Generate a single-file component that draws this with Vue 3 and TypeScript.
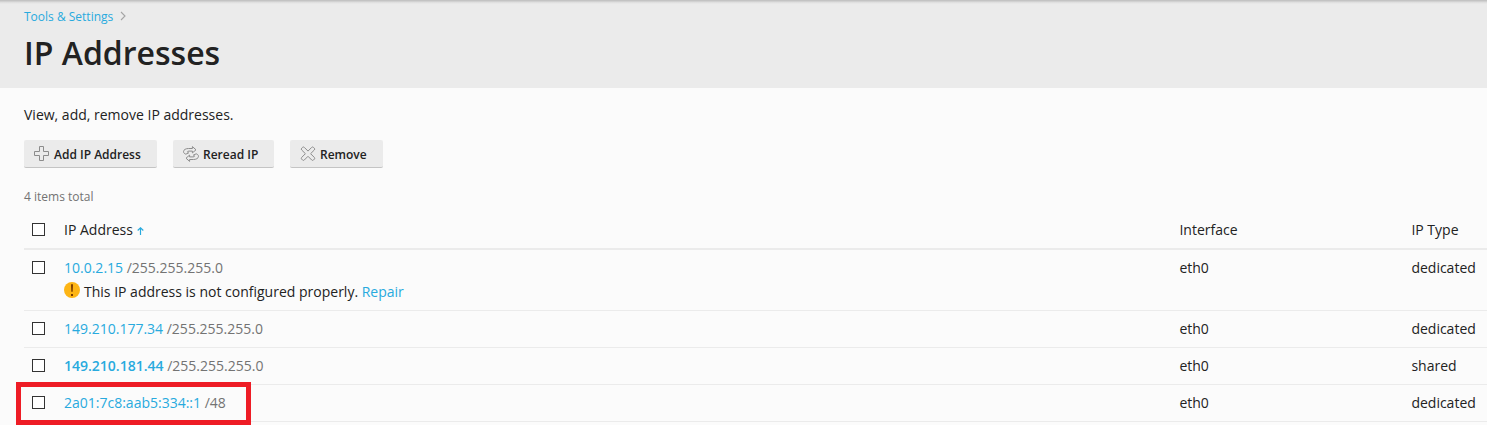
<script setup lang="ts">
interface Address {
  ip: string
  mask: string
  iface: string
  type: string
  main?: boolean
  broken?: boolean
  marked?: boolean
}

const addresses: Address[] = [
  { ip: '10.0.2.15', mask: '/255.255.255.0', iface: 'eth0', type: 'dedicated', broken: true },
  { ip: '149.210.177.34', mask: '/255.255.255.0', iface: 'eth0', type: 'dedicated' },
  { ip: '149.210.181.44', mask: '/255.255.255.0', iface: 'eth0', type: 'shared', main: true },
  { ip: '2a01:7c8:aab5:334::1', mask: '/48', iface: 'eth0', type: 'dedicated', marked: true },
]
</script>

<template>
  <div class="page">
    <header class="heading">
      <nav class="crumbs">
        <a class="link">Tools &amp; Settings</a>
        <svg class="chevron" width="6" height="10" viewBox="0 0 6 10"><path d="M1 1l4 4-4 4" /></svg>
      </nav>
      <h1>IP Addresses</h1>
    </header>

    <main class="content">
      <p class="intro">View, add, remove IP addresses.</p>

      <div class="toolbar">
        <button class="btn add" type="button">
          <svg width="16" height="16" viewBox="0 0 16 16">
            <path d="M5.5 .5h4v5h5v4h-5v5h-4v-5h-5v-4h5z" />
          </svg>
          <span>Add IP Address</span>
        </button>
        <button class="btn reread" type="button">
          <svg width="16" height="16" viewBox="0 0 16 16">
            <path d="M2.800 8.200C1.200 7.600.5 6.700.5 5.700.5 3.600 3 2.500 5.500 2.500H9.400V.6L13 3.800 9.400 6.900V5.100H6C4 5.100 3.900 6.400 5.600 6.900" />
            <path d="M13.200 7.800C14.800 8.400 15.500 9.300 15.500 10.300 15.500 12.400 13 13.500 10.500 13.500H6.600V15.400L3 12.200 6.600 9.100V10.900H10C12 10.900 12.100 9.600 10.400 9.100" />
            <path d="M2.800 8.200L5.600 6.900M13.200 7.800L10.400 9.100" />
          </svg>
          <span>Reread IP</span>
        </button>
        <button class="btn remove" type="button">
          <svg width="16" height="16" viewBox="-.5 -.2 16 16">
            <path d="M7.500 4.900L11.200 1.200Q12.100 .3 13 1.200L13.800 2Q14.700 2.900 13.800 3.800L10.100 7.500L13.800 11.200Q14.700 12.100 13.800 13L13 13.800Q12.100 14.700 11.200 13.800L7.500 10.100L3.800 13.800Q2.900 14.700 2 13.800L1.200 13Q.3 12.100 1.200 11.200L4.900 7.500L1.200 3.800Q.3 2.900 1.200 2L2 1.200Q2.900 .3 3.800 1.200Z" />
          </svg>
          <span>Remove</span>
        </button>
      </div>

      <div class="total">4 items total</div>

      <div class="list">
        <div class="row head">
          <span class="check"><i class="box"></i></span>
          <span class="sort">IP Address
            <svg width="7" height="8" viewBox="0 0 7 8"><path d="M3.500 8V1M.7 3.500L3.500 .8 6.300 3.500" /></svg>
          </span>
          <span>Interface</span>
          <span>IP Type</span>
        </div>
        <div v-for="a in addresses" :key="a.ip" class="row">
          <span class="check"><i class="box"></i></span>
          <div>
            <div><a class="link" :class="{ main: a.main }">{{ a.ip }}</a> <span class="mask">{{ a.mask }}</span></div>
            <div v-if="a.broken" class="warning">
              <svg width="16" height="16" viewBox="0 0 16 16">
                <circle cx="8" cy="8" r="8" />
                <path d="M7 2.200h2L8.700 9.800H7.300zM7 12h2v2H7z" />
              </svg>
              <span>This IP address is not configured properly. <a class="link">Repair</a></span>
            </div>
          </div>
          <span>{{ a.iface }}</span>
          <span>{{ a.type }}</span>
          <i v-if="a.marked" class="marker"></i>
        </div>
      </div>
    </main>
  </div>
</template>

<style>
html,
body {
  margin: 0;
  overflow: hidden;
  background: #fbfbfb;
}
</style>

<style scoped>
.page {
  height: 425px;
  overflow: hidden;
  background: #fbfbfb;
  color: #222;
  font: 14px/24px "Open Sans", "Noto Sans", sans-serif;
}
.heading {
  box-sizing: border-box;
  height: 88px;
  padding: 7px 24px 0;
  background: linear-gradient(#c0c0c0 0, #c6c6c6 1px, #dcdcdc 2px, #ebebeb 4px);
}
.crumbs {
  display: flex;
  align-items: center;
  gap: 7px;
  height: 20px;
  font-size: 12px;
}
.chevron {
  margin-top: -2px;
}
.chevron path {
  fill: none;
  stroke: #a4a4a4;
  stroke-width: 1.1;
}
.link {
  color: #28aade;
}
h1 {
  margin: 6px 0 0;
  font-size: 32px;
  line-height: 40px;
  font-weight: 600;
}
.content {
  padding: 15px 0 0 24px;
}
.intro {
  margin: 0;
}
.toolbar {
  display: flex;
  gap: 16px;
  margin-top: 13px;
}
.btn {
  box-sizing: border-box;
  display: flex;
  align-items: center;
  gap: 4px;
  height: 28px;
  padding: 0 0 0 10px;
  border: 0;
  border-bottom: 1px solid #c4c4c4;
  border-radius: 2px;
  background: #ebebeb;
  color: #222;
  font: 600 12px/27px "Open Sans", "Noto Sans", sans-serif;
  white-space: nowrap;
}
.add {
  width: 133px;
}
.reread {
  width: 101px;
}
.remove {
  width: 93px;
}
.btn svg {
  flex: none;
}
.btn span {
  padding-top: 2px;
}
.btn path {
  fill: none;
  stroke: #8c8c8c;
  stroke-width: 1;
}
.total {
  margin-top: 17px;
  color: #737373;
  font-size: 12px;
}
.list {
  margin-top: 3px;
}
.row {
  position: relative;
  display: grid;
  grid-template-columns: 40px 1115.4px 232px 1fr;
  padding: 6px 0;
  border-bottom: 1px solid #ebebeb;
}
.head {
  border-bottom-width: 2px;
}
.check {
  padding: 5px 0 0 8px;
}
.box {
  display: block;
  box-sizing: border-box;
  width: 13px;
  height: 13px;
  border: 1px solid #333;
  background: #fff;
}
.sort path {
  fill: none;
  stroke: #28aade;
  stroke-width: 1.2;
}
.main {
  font-weight: 600;
}
.mask {
  color: #737373;
}
.warning {
  display: flex;
  gap: 4px;
}
.warning svg {
  margin-top: 2px;
}
.warning circle {
  fill: #fdb515;
}
.warning path {
  fill: #7a3b00;
}
.marker {
  position: absolute;
  left: -8px;
  top: -3px;
  box-sizing: border-box;
  width: 235px;
  height: 43px;
  border: 5px solid #ee1c25;
}
</style>
